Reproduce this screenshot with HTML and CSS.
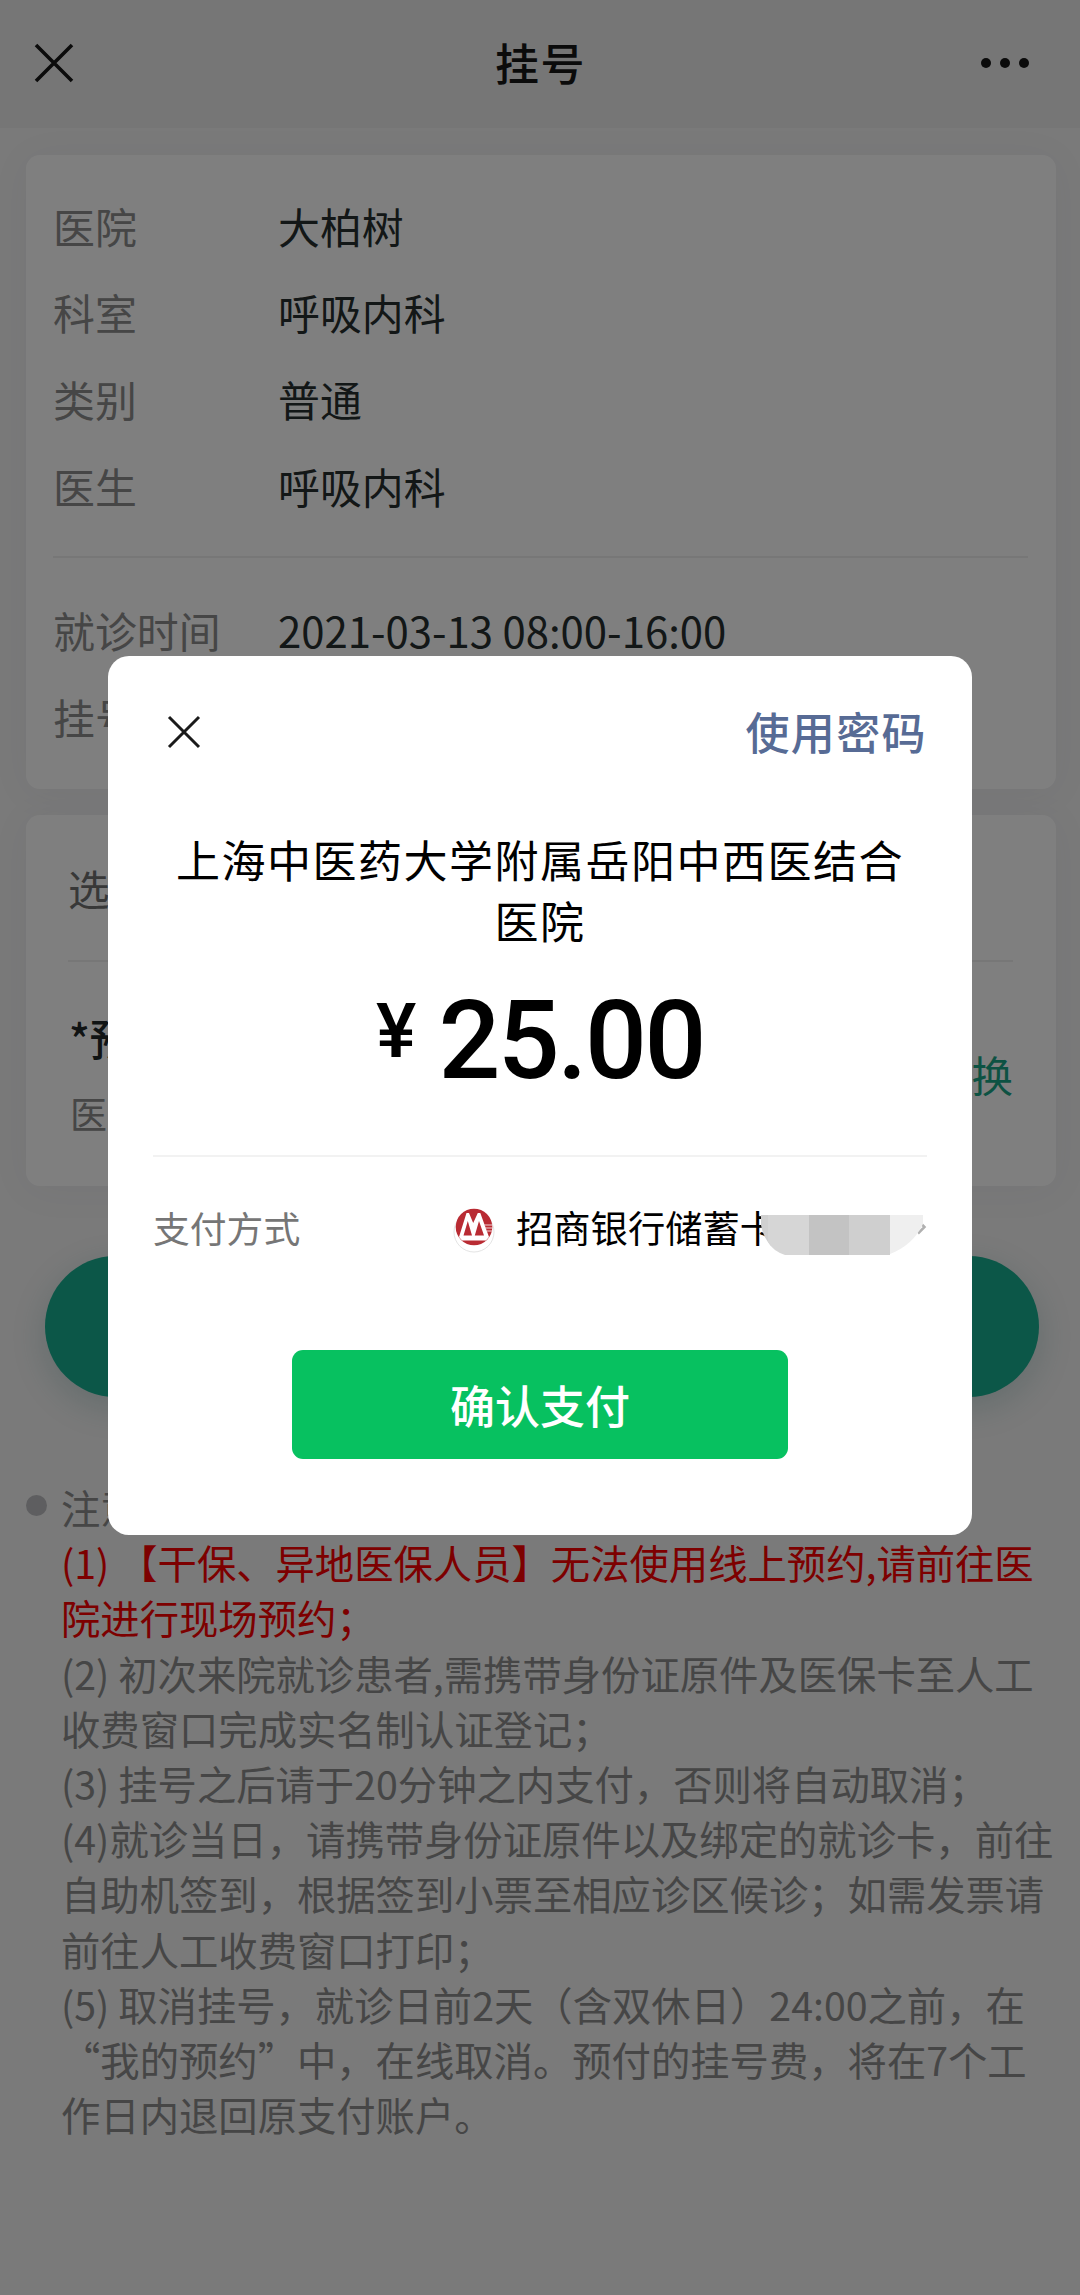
FILE: index.html
```html
<!DOCTYPE html>
<html lang="zh-CN">
<head>
<meta charset="utf-8">
<title>挂号</title>
<link rel="stylesheet" href="styles.css">
</head>
<body>
<div class="page">
  <header class="navbar">
    <svg class="nav-close" viewBox="0 0 40 40"><path d="M2 2 38 38M38 2 2 38"/></svg>
    <h1 class="nav-title">挂号</h1>
    <svg class="nav-more" viewBox="0 0 50 12"><circle cx="6" cy="6" r="5"/><circle cx="25" cy="6" r="5"/><circle cx="44" cy="6" r="5"/></svg>
  </header>

  <section class="card booking">
    <div class="row"><span class="label">医院</span><span class="value">大柏树</span></div>
    <div class="row"><span class="label">科室</span><span class="value">呼吸内科</span></div>
    <div class="row"><span class="label">类别</span><span class="value">普通</span></div>
    <div class="row"><span class="label">医生</span><span class="value">呼吸内科</span></div>
    <hr class="divider">
    <div class="row"><span class="label">就诊时间</span><span class="value">2021-03-13 08:00-16:00</span></div>
    <div class="row"><span class="label">挂号</span></div>
  </section>

  <section class="card patient">
    <div class="select">选</div>
    <div class="patient-row">
      <div>
        <div class="patient-name">*预</div>
        <div class="patient-type">医</div>
      </div>
      <span class="switch">换</span>
    </div>
  </section>

  <div class="submit"></div>

  <section class="notes">
    <i class="bullet"></i>
    <div class="notes-text">
      <p>注意</p>
      <p class="warn">(1) 【干保、异地医保人员】无法使用线上预约,请前往医<br>院进行现场预约；</p>
      <p>(2) 初次来院就诊患者,需携带身份证原件及医保卡至人工<br>收费窗口完成实名制认证登记；</p>
      <p>(3) 挂号之后请于20分钟之内支付，否则将自动取消；</p>
      <p>(4)就诊当日，请携带身份证原件以及绑定的就诊卡，前往<br>自助机签到，根据签到小票至相应诊区候诊；如需发票请<br>前往人工收费窗口打印；</p>
      <p>(5) 取消挂号，就诊日前2天（含双休日）24:00之前，在<br>“我的预约”中，在线取消。预付的挂号费，将在7个工<br>作日内退回原支付账户。</p>
    </div>
  </section>
</div>

<div class="mask">
  <div class="dialog">
    <div class="dialog-head">
      <svg class="dialog-close" viewBox="0 0 34 34"><path d="M2 2 32 32M32 2 2 32"/></svg>
      <span class="use-password">使用密码</span>
    </div>
    <div class="payee">上海中医药大学附属岳阳中西医结合<br>医院</div>
    <div class="amount"><span class="yen">¥</span><span class="sum">25.00</span></div>
    <div class="method">
      <span class="method-label">支付方式</span>
      <svg class="bank-logo" viewBox="0 0 44 50">
        <circle class="logo-rim" cx="22" cy="27" r="20"/>
        <circle class="logo-red" cx="22" cy="22" r="18.3"/>
        <path class="logo-mark" d="M7 32 14.500 8H17L21.200 18 25.800 8H28.300L37 32 34 35.500H10z"/>
        <path class="logo-cut" d="M11.500 30.500 15.800 16 20 30.500zM22.800 30.500 27 16 32 30.500z"/>
        <path class="logo-line" d="M32 20h8M33 23h7M34.500 26h6"/>
      </svg>
      <span class="bank-name">招商银行储蓄卡</span>
      <svg class="chevron" viewBox="0 0 12 18"><path d="M3 2.500 9.500 9 3 15.500"/></svg>
      <svg class="mosaic" viewBox="0 0 164 40">
        <path fill="#d0d0d0" d="M0 0H10V31Q2 22 0 10z"/>
        <path fill="#d6d6d6" d="M7 0H48V40H24Q12 36 7 27z"/>
        <path fill="#c3c3c3" d="M48 0H89V40H48z"/>
        <path fill="#cfcfcf" d="M88 0H129V40H88z"/>
        <path fill="#efefef" d="M129 0H162V9Q152 30 129 39z"/>
      </svg>
    </div>
    <div class="confirm">确认支付</div>
  </div>
</div>
</body>
</html>
```
FILE: styles.css
```css
* { box-sizing: border-box; }

body {
  margin: 0;
  font-family: "Noto Sans CJK SC", "Noto Sans", sans-serif;
  background: #f4f4f4;
}

.page {
  height: 2295px;
  overflow: hidden;
  white-space: nowrap;
}

.navbar {
  display: flex;
  align-items: center;
  justify-content: space-between;
  height: 128px;
  padding: 0 50px 2px 34px;
  background: #ededed;
}

.nav-close {
  width: 40px;
  height: 40px;
  fill: none;
  stroke: #161616;
  stroke-width: 3.6;
}

.nav-title {
  margin: 0 0 0 27px;
  padding-bottom: 2px;
  font-size: 44px;
  font-weight: 500;
  letter-spacing: 1.500px;
  color: #161616;
}

.nav-more {
  width: 50px;
  height: 12px;
  fill: #161616;
}

.card {
  margin: 0 24px 0 26px;
  border-radius: 14px;
  background: #fff;
  box-shadow: 0 4px 40px rgba(60, 50, 110, .05);
}

.booking {
  height: 634px;
  margin-top: 27px;
  padding: 27px 28px 0 27px;
  font-size: 41.900px;
}

.row {
  display: flex;
  align-items: center;
  height: 86.600px;
}

.label {
  width: 225px;
  color: #8c8c8c;
}

.value { color: #272f2f; }

.divider {
  height: 2px;
  margin: 28px 0;
  border: 0;
  background: #efefef;
}

.patient {
  height: 371px;
  margin-top: 26px;
  padding: 0 43px 0 42px;
}

.select {
  height: 147px;
  border-bottom: 2px solid #efefef;
  font-size: 41.500px;
  line-height: 146px;
  color: #707070;
}

.patient-row {
  display: flex;
  align-items: center;
  justify-content: space-between;
  height: 224px;
}

.patient-name {
  height: 77px;
  padding-left: 1px;
  font-size: 43px;
  font-weight: 500;
  line-height: 76px;
  color: #222828;
}

.patient-type {
  padding-left: 2px;
  height: 74px;
  font-size: 37px;
  line-height: 75px;
  color: #8c8c8c;
}

.switch {
  font-size: 41.500px;
  color: #1aa486;
}

.submit {
  height: 141px;
  margin: 70px 41px 0 45px;
  border-radius: 71px;
  background: #18ae90;
  box-shadow: 0 10px 34px rgba(24, 110, 110, .2);
}

.notes {
  display: flex;
  gap: 14px;
  margin-top: 82px;
  padding-left: 26px;
  font-size: 39.350px;
  line-height: 55.200px;
  color: #8c8c8c;
}

.bullet {
  width: 21px;
  height: 21px;
  margin-top: 16px;
  border-radius: 50%;
  background: #bcbdc0;
}

.notes p { margin: 0; }

.notes .warn { color: #fa0000; }

.mask {
  position: absolute;
  inset: 0;
  height: 2295px;
  padding: 656px 108px 0;
  background: rgba(0, 0, 0, .5);
}

.dialog {
  height: 879px;
  padding: 0 45px;
  border-radius: 21px;
  background: #fff;
  white-space: nowrap;
}

.dialog-head {
  display: flex;
  align-items: center;
  justify-content: space-between;
  height: 152px;
  padding: 0 0 0 14px;
}

.dialog-close {
  width: 34px;
  height: 34px;
  fill: none;
  stroke: #1a1a1a;
  stroke-width: 3;
}

.use-password {
  padding-bottom: 2px;
  font-size: 44px;
  font-weight: 500;
  letter-spacing: 1.400px;
  color: #576b95;
}

.payee {
  margin-top: 21px;
  font-size: 44px;
  line-height: 61px;
  letter-spacing: 1.500px;
  text-align: center;
  color: #000;
}

.amount {
  display: flex;
  align-items: flex-start;
  justify-content: center;
  gap: 22px;
  height: 204px;
  padding-top: 26px;
  font-family: Roboto, sans-serif;
  font-weight: 500;
  color: #000;
}

.yen {
  margin-top: 16px;
  font-size: 76px;
  line-height: 76px;
}

.sum {
  font-size: 109px;
  line-height: 128px;
  letter-spacing: -2.500px;
}

.method {
  position: relative;
  display: flex;
  align-items: center;
  height: 142px;
  border-top: 2px solid #f2f2f2;
  font-size: 37.300px;
}

.method-label {
  flex: 1;
  font-size: 36.800px;
  color: #767676;
}

.bank-logo {
  width: 44px;
  height: 50px;
  margin: 6px 20px 0 0;
}

.logo-rim { fill: #fff; stroke: #e4e4e4; stroke-width: 1; }
.logo-red { fill: #b92b33; }
.logo-mark { fill: #fff; }
.logo-cut { fill: #b92b33; }
.logo-line { stroke: #f3d5d7; stroke-width: 1; }

.bank-name {
  width: 399px;
  color: #000;
}

.chevron {
  width: 12px;
  height: 18px;
  fill: none;
  stroke: #b0b0b0;
  stroke-width: 2.500;
}

.mosaic {
  position: absolute;
  top: 58px;
  right: 2px;
  width: 164px;
  height: 40px;
}

.confirm {
  width: 496px;
  height: 109px;
  margin: 53px auto 0;
  border-radius: 11px;
  background: #07c160;
  font-size: 45px;
  font-weight: 500;
  line-height: 109px;
  text-align: center;
  color: #fff;
}
```
